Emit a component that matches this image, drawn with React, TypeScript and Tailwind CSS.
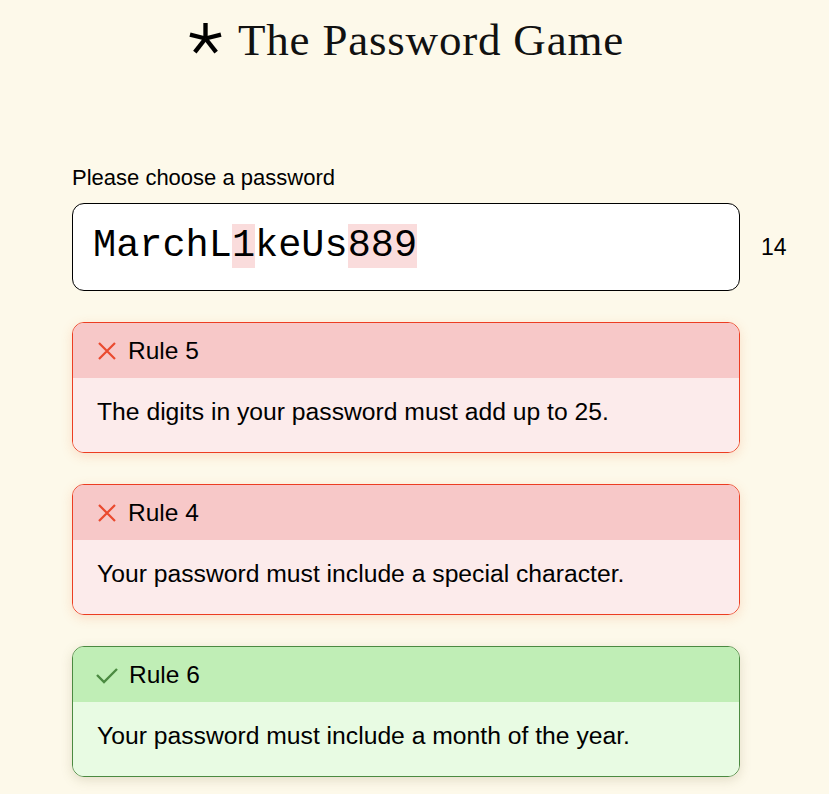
import React from 'react';

type Rule = {
  n: number;
  text: string;
  ok: boolean;
};

const rules: Rule[] = [
  { n: 5, text: 'The digits in your password must add up to 25.', ok: false },
  { n: 4, text: 'Your password must include a special character.', ok: false },
  { n: 6, text: 'Your password must include a month of the year.', ok: true },
];

const Star = () => (
  <svg width="33" height="31" viewBox="0 0 34 32" className="mr-4 -mt-[3px]">
    <g stroke="#000" strokeWidth="4.5" strokeLinecap="butt" fill="none">
      <line x1="17" y1="16" x2="17" y2="0" />
      <line x1="17" y1="16" x2="1" y2="12" />
      <line x1="17" y1="16" x2="33" y2="12" />
      <line x1="17" y1="16" x2="6" y2="30" />
      <line x1="17" y1="16" x2="28" y2="30" />
    </g>
  </svg>
);

const Cross = () => (
  <svg width="20" height="20" viewBox="0 0 20 20">
    <path d="M2 2 L18 18 M18 2 L2 18" stroke="#ea4a2f" strokeWidth="2.2" fill="none" />
  </svg>
);

const Check = () => (
  <svg width="22" height="20" viewBox="0 0 22 20">
    <path d="M1 10 L8 17 L21 4" stroke="#4b8a41" strokeWidth="2.4" fill="none" />
  </svg>
);

const RuleCard = ({ rule }: { rule: Rule }) => {
  const ok = rule.ok;
  return (
    <div
      className={
        ok
          ? 'overflow-hidden rounded-xl border border-[#4b8a41] shadow-[0_3px_12px_rgba(120,110,60,0.2)]'
          : 'overflow-hidden rounded-xl border border-[#ec3d22] shadow-[0_3px_12px_rgba(236,120,60,0.2)]'
      }
    >
      <div
        className={
          ok
            ? 'flex h-[55px] items-center gap-3 bg-[#c0eeb6] pl-[23px] pt-[1px]'
            : 'flex h-[55px] items-center gap-3 bg-[#f7c8c8] pl-[24px] pt-[1px]'
        }
      >
        {ok ? <Check /> : <Cross />}
        <span className="-ml-[1px] text-[24.5px]">Rule {rule.n}</span>
      </div>
      <div
        className={
          ok
            ? 'flex h-[74px] items-center bg-[#e8fbe3] px-6 pb-[6px] text-[24.7px]'
            : 'flex h-[74px] items-center bg-[#fcebeb] px-6 pb-[6px] text-[24.7px]'
        }
      >
        {rule.text}
      </div>
    </div>
  );
};

export default function App() {
  return (
    <div className="min-h-[794px] bg-[#fdf9ea] font-['Liberation_Sans',Arial,sans-serif] text-black">
      <div className="flex items-center justify-center pt-[15px] pr-[16px]">
        <Star />
        <h1 className="font-['Liberation_Serif',serif] text-[45px] leading-[50px] tracking-[0.8px] text-[#111]">
          The Password Game
        </h1>
      </div>

      <div className="mt-[101px] pl-[72px]">
        <div className="text-[22px] leading-[23px]">Please choose a password</div>
        <div className="mt-[14px] flex items-center">
          <div className="flex h-[88px] w-[668px] items-center rounded-xl border border-black bg-white px-5">
            <span className="font-['Liberation_Mono',monospace] text-[38.6px] text-black">
              MarchL<span className="bg-[#fadcdc]">1</span>keUs<span className="bg-[#fadcdc]">889</span>
            </span>
          </div>
          <div className="ml-[21px] text-[23px]">14</div>
        </div>

        <div className="mt-[31px] flex w-[668px] flex-col gap-[31px]">
          {rules.map((r) => (
            <RuleCard key={r.n} rule={r} />
          ))}
        </div>
      </div>
    </div>
  );
}
